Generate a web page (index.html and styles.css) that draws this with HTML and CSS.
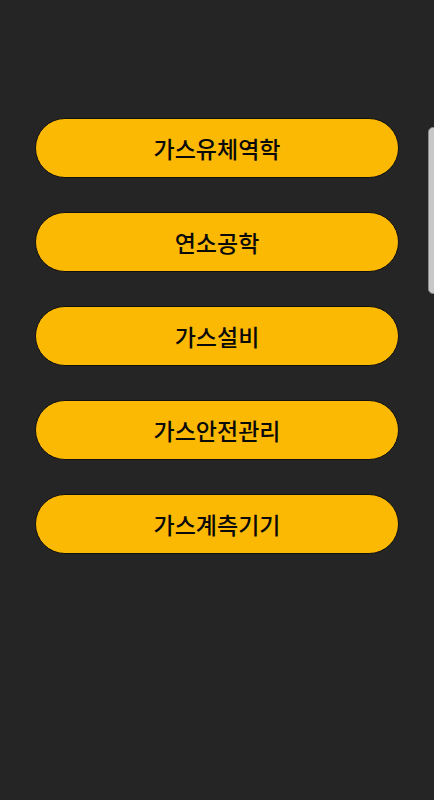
FILE: index.html
```html
<!DOCTYPE html>
<html lang="ko">
<head>
  <meta charset="UTF-8">
  <meta name="viewport" content="width=device-width, initial-scale=1.0">
  <title>가스 과목</title>
  <link rel="stylesheet" href="styles.css">
</head>
<body>
  <div class="menu">
    <button class="subject">가스유체역학</button>
    <button class="subject">연소공학</button>
    <button class="subject">가스설비</button>
    <button class="subject">가스안전관리</button>
    <button class="subject">가스계측기기</button>
  </div>
  <div class="handle"></div>
</body>
</html>
```

FILE: styles.css
```css
body {
  margin: 0;
  background-color: #252525;
  font-family: "Noto Sans CJK KR", "Noto Sans", sans-serif;
  height: 800px;
  overflow: hidden;
}
.menu {
  display: flex;
  flex-direction: column;
  gap: 34px;
  padding: 118px 35px 0 35px;
  width: 364px;
}
.subject {
  height: 60px;
  border: 1px solid #111;
  border-radius: 30px;
  background-color: #fbb904;
  color: #0a0a0a;
  font-family: inherit;
  font-size: 23px;
  font-weight: 500;
  padding: 0;
  cursor: pointer;
}
.handle {
  position: absolute;
  left: 428px;
  top: 127px;
  width: 20px;
  height: 165px;
  background: #c8c8c8;
  border: 1px solid #8a8a8a;
  border-radius: 5px;
}
```
